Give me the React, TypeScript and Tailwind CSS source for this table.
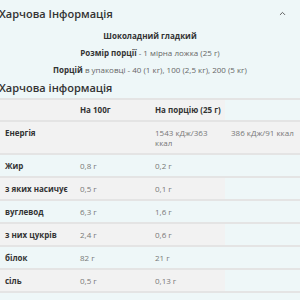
import { ChevronUp } from "lucide-react";

type Row = { label: string; per100: string; perServing: React.ReactNode; extra?: string; tall?: boolean };

const rows: Row[] = [
  { label: "Енергія", per100: "", perServing: <>1543 кДж/363<br />ккал</>, extra: "386 кДж/91 ккал", tall: true },
  { label: "Жир", per100: "0,8 г", perServing: "0,2 г" },
  { label: "з яких насичує", per100: "0,5 г", perServing: "0,1 г" },
  { label: "вуглевод", per100: "6,3 г", perServing: "1,6 г" },
  { label: "з них цукрів", per100: "2,4 г", perServing: "0,6 г" },
  { label: "білок", per100: "82 г", perServing: "21 г" },
  { label: "сіль", per100: "0,5 г", perServing: "0,13 г" },
];

export default function App() {
  return (
    <div className="w-[300px] h-[300px] overflow-hidden bg-[#eef7f8] text-[#333] font-['Open_Sans',sans-serif]">
      {/* accordion header */}
      <div className="flex items-center justify-between h-[26px] pr-[13px]">
        <h2 className="text-[11px] font-semibold leading-none -ml-[1px]">Харчова Інформація</h2>
        <ChevronUp className="w-[9px] h-[9px] text-[#555]" strokeWidth={2.5} />
      </div>

      <div className="flex flex-col items-center text-[8px] leading-[17px] text-[#666] pt-[1px]">
        <p className="font-bold text-[#333]">Шоколадний гладкий</p>
        <p>
          <span className="font-bold text-[#333]">Розмір порції</span> - 1 мірна ложка (25 г)
        </p>
        <p>
          <span className="font-bold text-[#333]">Порцій</span> в упаковці - 40 (1 кг), 100 (2,5 кг), 200 (5 кг)
        </p>
      </div>

      <h3 className="text-[11px] font-semibold leading-none mt-[4px] mb-[5px] -ml-[1px]">Харчова інформація</h3>

      <div className="text-[8px] leading-[10px]">
        <div className="flex h-[24px] border-y-2 border-[#e4e4e4] font-bold whitespace-nowrap">
          <div className="w-[75px] bg-[#f2f2f2]" />
          <div className="w-[75px] bg-[#f2f2f2] px-[5px] flex items-center">На 100г</div>
          <div className="w-[75px] bg-[#f2f2f2] px-[5px] flex items-center">На порцію (25 г)</div>
        </div>
        {rows.map((r, i) => {
          const grey = i % 2 === 0 ? "bg-[#f2f2f2]" : "";
          const cell = r.tall ? "pt-[6px]" : "flex items-center";
          return (
            <div key={r.label} className={`flex border-b-2 border-[#e4e4e4] ${r.tall ? "h-[33px]" : "h-[23px]"}`}>
              <div className={`w-[75px] px-[5px] font-bold whitespace-nowrap overflow-hidden ${grey} ${cell}`}>{r.label}</div>
              <div className={`w-[75px] px-[5px] text-[#777] ${grey} ${cell}`}>{r.per100}</div>
              <div className={`w-[75px] px-[5px] text-[#777] ${grey} ${cell}`}>{r.perServing}</div>
              {r.extra && (
                <div className={`w-[75px] px-[6px] text-[#777] whitespace-nowrap ${grey} ${cell}`}>{r.extra}</div>
              )}
            </div>
          );
        })}
      </div>
    </div>
  );
}
